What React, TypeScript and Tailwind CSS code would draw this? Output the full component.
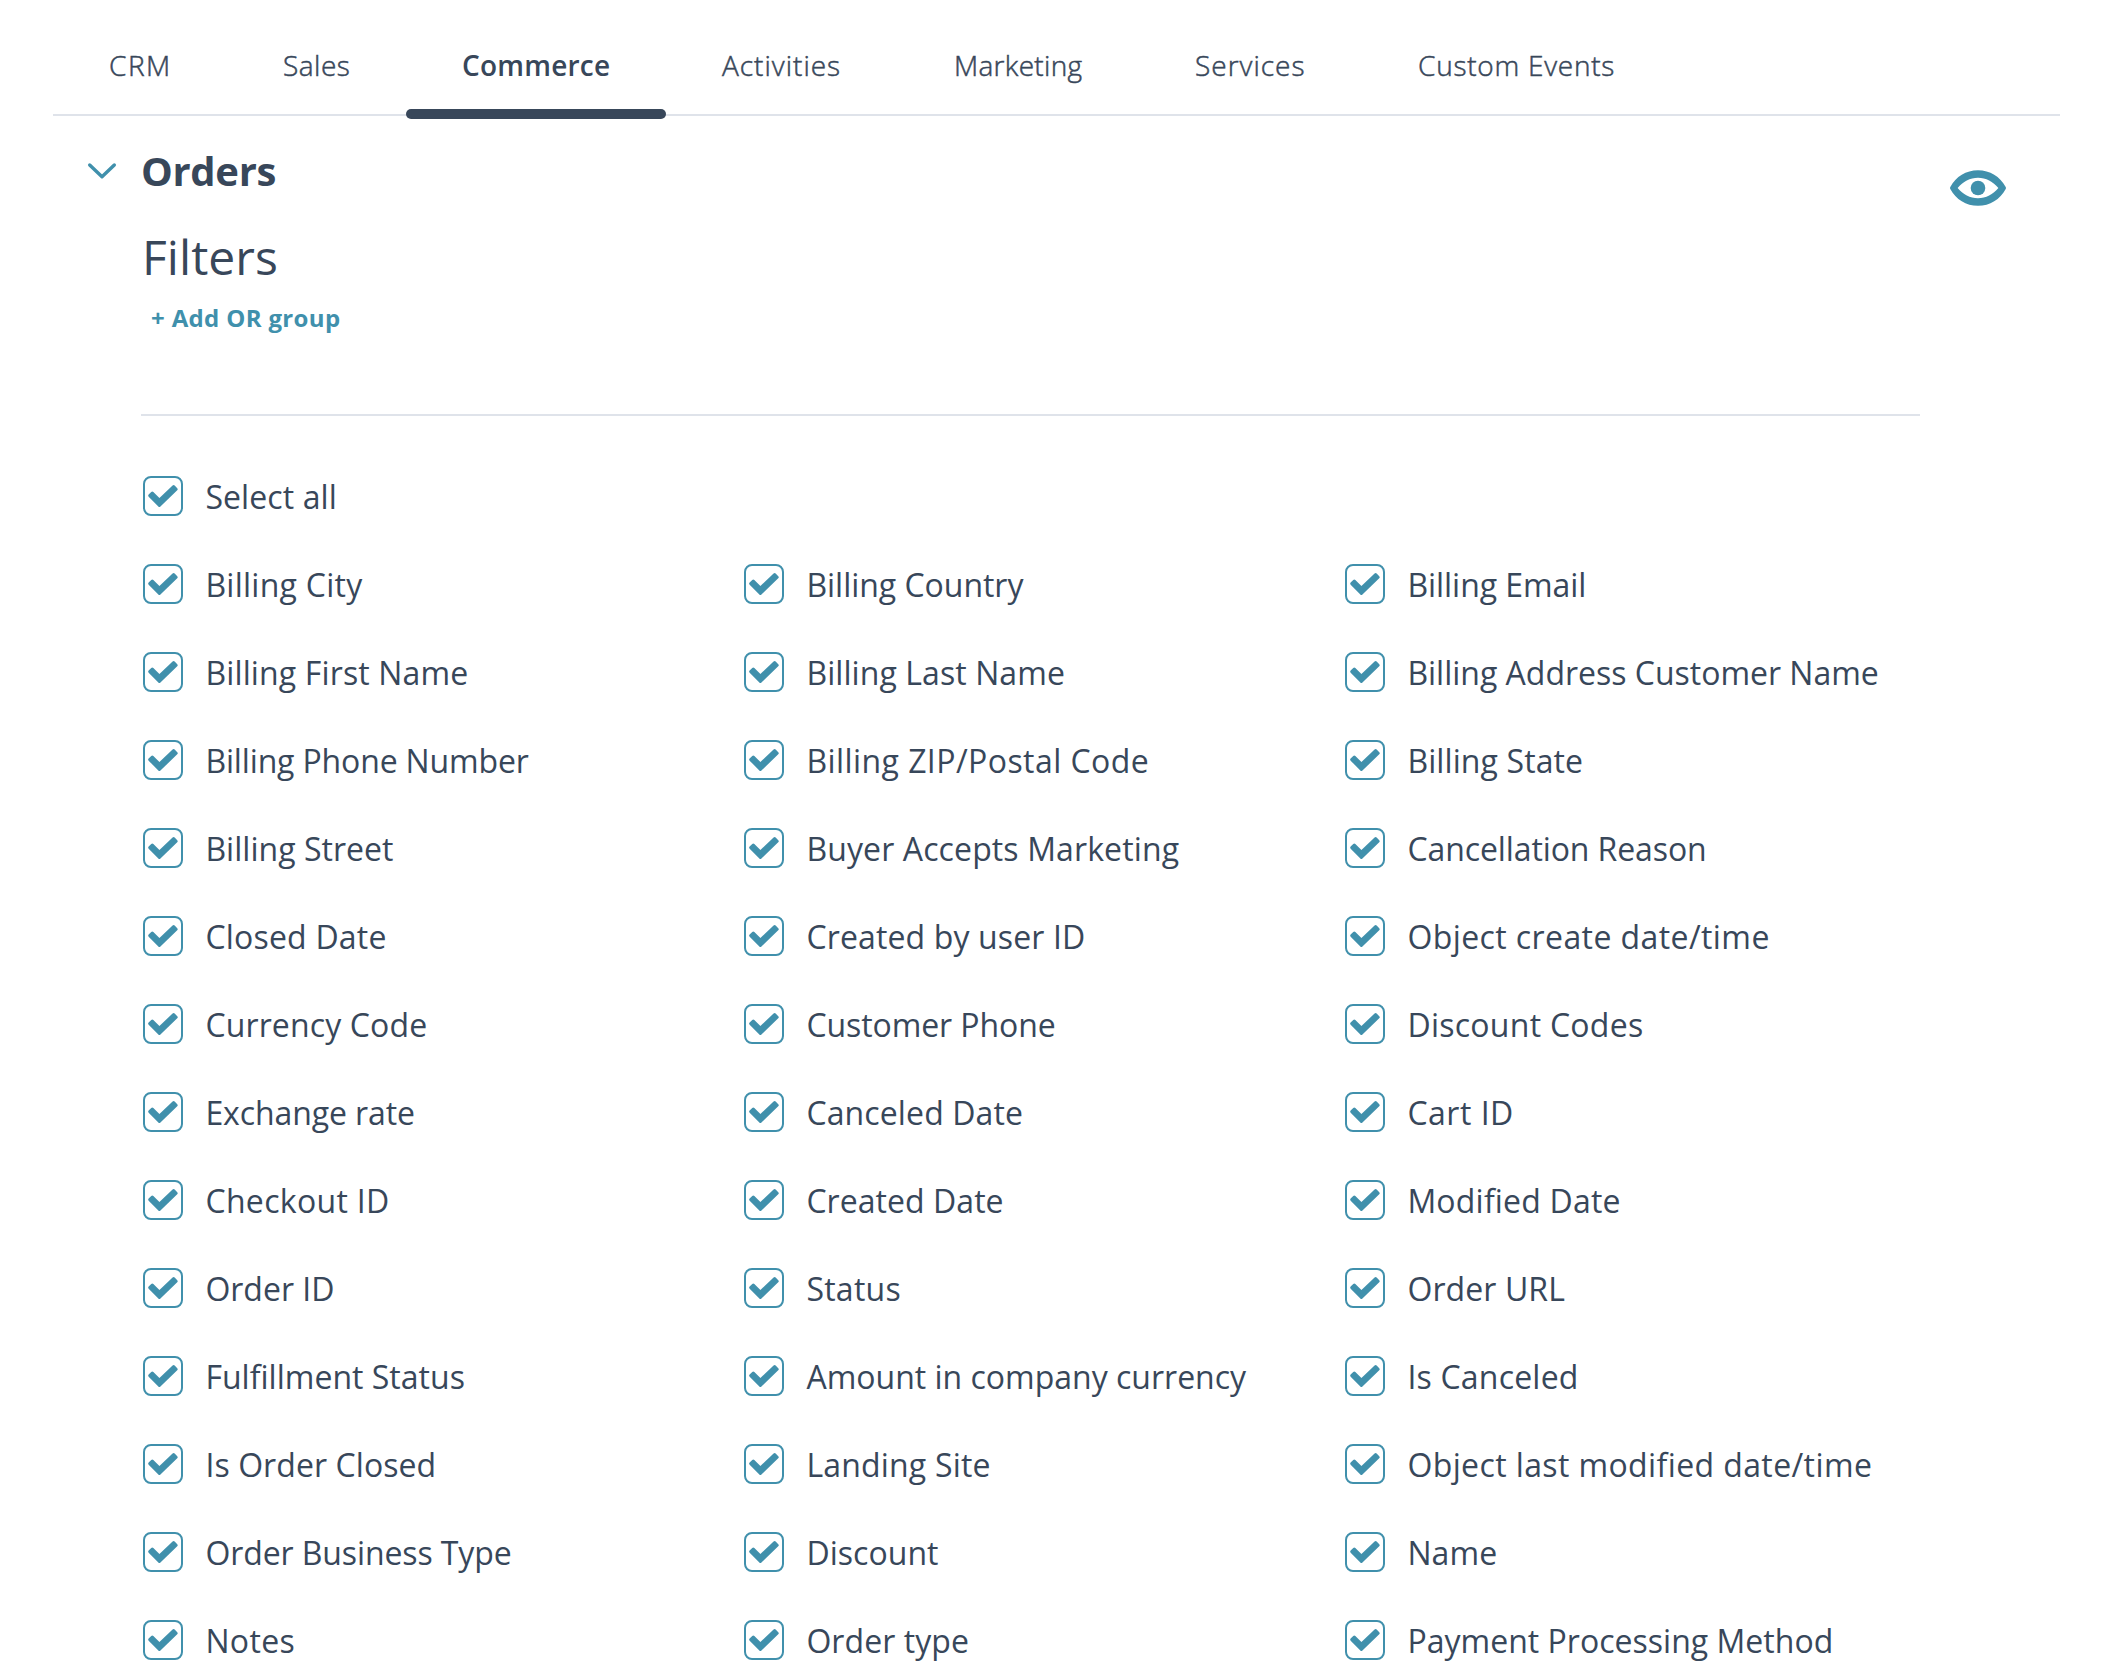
import React from "react";

type Label = { text: string; tracking: string };

const tabs: { text: string; style: string; active?: boolean }[] = [
  { text: "CRM", style: "w-[174px] tracking-[1.5px]" },
  { text: "Sales", style: "w-[179px] tracking-[0.5px]" },
  { text: "Commerce", style: "w-[260px] tracking-[0.23px]", active: true },
  { text: "Activities", style: "w-[232px] tracking-[1px]" },
  { text: "Marketing", style: "w-[241px] tracking-[0.3px]" },
  { text: "Services", style: "w-[223px] tracking-[1px]" },
  { text: "Custom Events", style: "w-[310px] tracking-[0.75px]" },
];

const properties: Label[] = [
  { text: "Billing City", tracking: "tracking-[0.26px]" },
  { text: "Billing Country", tracking: "tracking-[-0.03px]" },
  { text: "Billing Email", tracking: "tracking-[-0.05px]" },
  { text: "Billing First Name", tracking: "tracking-[0.14px]" },
  { text: "Billing Last Name", tracking: "tracking-[0.08px]" },
  { text: "Billing Address Customer Name", tracking: "tracking-[-0.01px]" },
  { text: "Billing Phone Number", tracking: "tracking-[-0.15px]" },
  { text: "Billing ZIP/Postal Code", tracking: "tracking-[0.43px]" },
  { text: "Billing State", tracking: "tracking-[0.1px]" },
  { text: "Billing Street", tracking: "tracking-[0.03px]" },
  { text: "Buyer Accepts Marketing", tracking: "tracking-[0.12px]" },
  { text: "Cancellation Reason", tracking: "tracking-[-0.1px]" },
  { text: "Closed Date", tracking: "tracking-[0.2px]" },
  { text: "Created by user ID", tracking: "tracking-[0.14px]" },
  { text: "Object create date/time", tracking: "tracking-[0.41px]" },
  { text: "Currency Code", tracking: "tracking-[0.13px]" },
  { text: "Customer Phone", tracking: "tracking-[-0.08px]" },
  { text: "Discount Codes", tracking: "tracking-[0.27px]" },
  { text: "Exchange rate", tracking: "tracking-[-0.1px]" },
  { text: "Canceled Date", tracking: "tracking-[0.12px]" },
  { text: "Cart ID", tracking: "tracking-[0.5px]" },
  { text: "Checkout ID", tracking: "tracking-[0.33px]" },
  { text: "Created Date", tracking: "tracking-[0.05px]" },
  { text: "Modified Date", tracking: "tracking-[0.2px]" },
  { text: "Order ID", tracking: "tracking-[0px]" },
  { text: "Status", tracking: "tracking-[0.25px]" },
  { text: "Order URL", tracking: "tracking-[0.1px]" },
  { text: "Fulfillment Status", tracking: "tracking-[0.02px]" },
  { text: "Amount in company currency", tracking: "tracking-[0px]" },
  { text: "Is Canceled", tracking: "tracking-[0.2px]" },
  { text: "Is Order Closed", tracking: "tracking-[0.08px]" },
  { text: "Landing Site", tracking: "tracking-[0.18px]" },
  { text: "Object last modified date/time", tracking: "tracking-[0.39px]" },
  { text: "Order Business Type", tracking: "tracking-[-0.1px]" },
  { text: "Discount", tracking: "tracking-[0.05px]" },
  { text: "Name", tracking: "tracking-[0.1px]" },
  { text: "Notes", tracking: "tracking-[0.35px]" },
  { text: "Order type", tracking: "tracking-[0.08px]" },
  { text: "Payment Processing Method", tracking: "tracking-[0.02px]" },
];

function CheckedBox() {
  return (
    <svg viewBox="0 0 40 40" className="size-10 shrink-0 text-[#4090ac]" fill="none" stroke="currentColor" strokeWidth="2">
      <rect x="1" y="1" width="38" height="38" rx="7" />
      <path
        d="M6.7 19.6 9.3 17 16.4 24 30.6 10.6 33.2 13.2 16.4 29.5Z"
        fill="currentColor"
        strokeWidth="3"
        strokeLinejoin="round"
      />
    </svg>
  );
}

function Property({ text, tracking }: Label) {
  return (
    <label className="flex h-10 items-center gap-[22.4px]">
      <CheckedBox />
      <span className={`pt-px text-[32px] leading-[41px] whitespace-nowrap ${tracking}`}>{text}</span>
    </label>
  );
}

export default function App() {
  return (
    <div className="h-[1664px] w-[2120px] overflow-hidden bg-white font-['Open_Sans',sans-serif] text-[#38475a]">
      <nav className="ml-[53px] flex h-[116px] w-[2007px] border-b-2 border-[#dfe3ea]">
        {tabs.map((tab) => (
          <div
            key={tab.text}
            className={`relative shrink-0 pt-[45px] pl-14 text-[28px] leading-10 whitespace-nowrap ${tab.style} ${
              tab.active ? "font-semibold" : "font-light [-webkit-text-stroke:0.5px]"
            }`}
          >
            {tab.text}
            {tab.active && <div className="absolute inset-x-0 top-[109px] h-[10px] rounded-[5px] bg-[#38475a]" />}
          </div>
        ))}
      </nav>

      <section className="flex pt-[35px]">
        <div className="flex w-[141px] shrink-0 justify-end pt-[11px] pr-[24px]">
          <svg viewBox="0 0 30 18" className="h-[18px] w-[30px] text-[#4090ac]" fill="none" stroke="currentColor" strokeWidth="3.4" strokeLinecap="round" strokeLinejoin="round">
            <path d="M2.7 3 15 14.8 27.3 3" />
          </svg>
        </div>
        <div className="w-[1779px] shrink-0">
          <h1 className="text-[40px] leading-10 font-bold tracking-[-0.32px]">Orders</h1>
          <h2 className="mt-[36px] ml-px text-[48px] leading-[60px] tracking-[0.05px]">Filters</h2>
          <button className="mt-[15px] ml-[10px] block text-[24px] leading-[32px] font-bold tracking-[0.35px] text-[#4090ac]">
            + Add OR group
          </button>
          <hr className="mt-[80px] border-t-2 border-[#dfe3ea]" />
        </div>
        <svg viewBox="0 0 56 36" className="mt-[19px] ml-[30px] h-9 w-14 shrink-0 text-[#4090ac]" fill="currentColor">
          <path
            fillRule="evenodd"
            d="M0.3 19Q-0.2 18 0.3 17C6 6.5 16 0.2 28 0.2S50 6.5 55.7 17Q56.2 18 55.7 19C50 29.5 40 35.8 28 35.8S6 29.5 0.3 19ZM7.6 18C13 24.5 20 28.2 28 28.2S43 24.5 48.4 18C43 11.5 36 7.7 28 7.7S13 11.5 7.6 18Z"
          />
          <circle cx="28" cy="18" r="7.3" />
        </svg>
      </section>

      <div className="mt-[60px] ml-[143px]">
        <Property text="Select all" tracking="tracking-[0.1px]" />
        <div className="mt-12 grid grid-cols-[601px_601px_601px] gap-y-12">
          {properties.map((p) => (
            <Property key={p.text} {...p} />
          ))}
        </div>
      </div>
    </div>
  );
}
